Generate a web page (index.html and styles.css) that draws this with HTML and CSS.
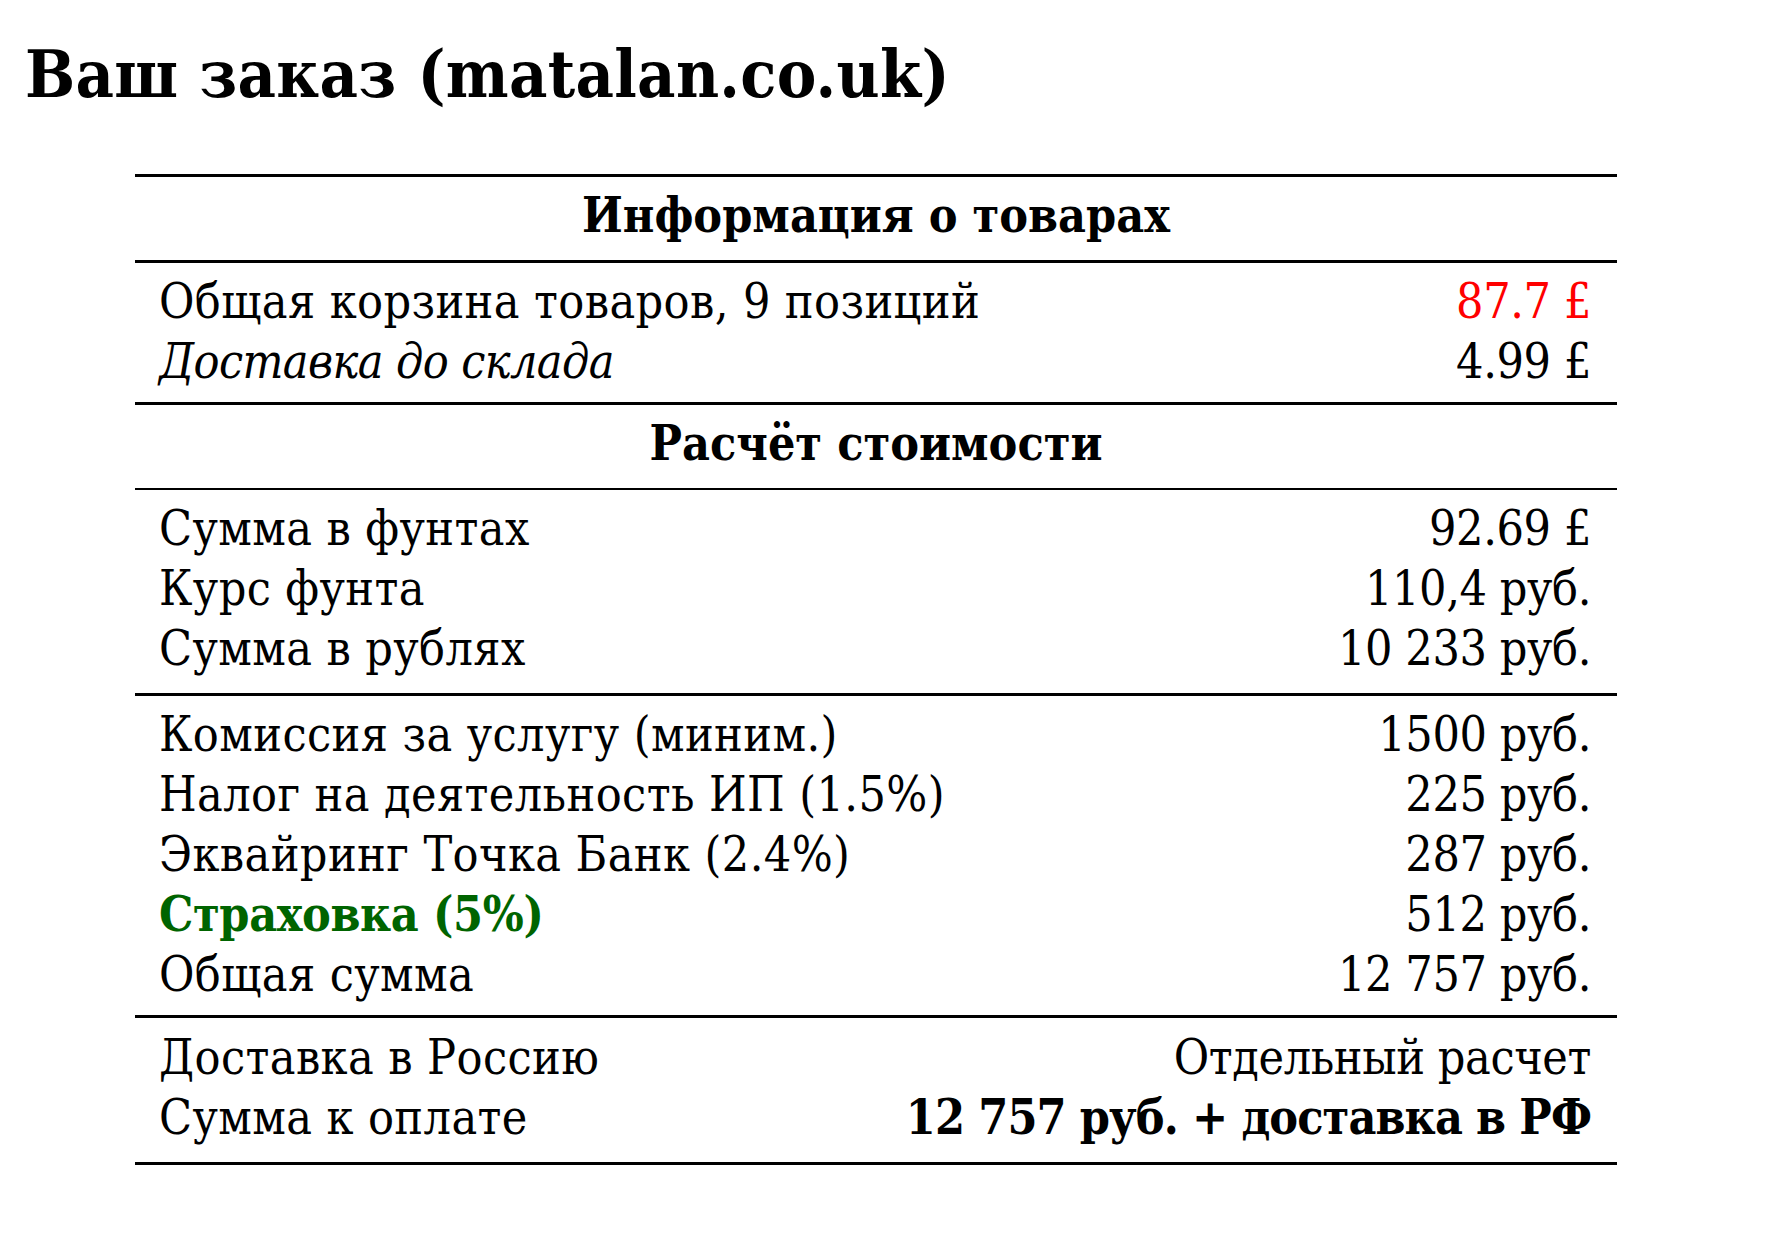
FILE: index.html
```html
<!DOCTYPE html>
<html lang="ru">
<head>
<meta charset="utf-8">
<title>Ваш заказ (matalan.co.uk)</title>
<link rel="stylesheet" href="styles.css">
</head>
<body>
<h1 class="title">Ваш заказ (matalan.co.uk)</h1>
<div class="order">
  <div class="section-head top">Информация о товарах</div>
  <div class="group">
    <div class="row"><span>Общая корзина товаров, 9 позиций</span><span class="val red">87.7 £</span></div>
    <div class="row"><span class="it">Доставка до склада</span><span class="val">4.99 £</span></div>
  </div>
  <div class="section-head thin">Расчёт стоимости</div>
  <div class="group roomy">
    <div class="row"><span>Сумма в фунтах</span><span class="val">92.69 £</span></div>
    <div class="row"><span>Курс фунта</span><span class="val">110,4 руб.</span></div>
    <div class="row"><span>Сумма в рублях</span><span class="val">10 233 руб.</span></div>
  </div>
  <div class="group">
    <div class="row"><span>Комиссия за услугу (миним.)</span><span class="val">1500 руб.</span></div>
    <div class="row"><span>Налог на деятельность ИП (1.5%)</span><span class="val">225 руб.</span></div>
    <div class="row"><span>Эквайринг Точка Банк (2.4%)</span><span class="val">287 руб.</span></div>
    <div class="row"><span class="green">Страховка (5%)</span><span class="val">512 руб.</span></div>
    <div class="row"><span>Общая сумма</span><span class="val">12 757 руб.</span></div>
  </div>
  <div class="group roomy last">
    <div class="row"><span>Доставка в Россию</span><span class="val">Отдельный расчет</span></div>
    <div class="row"><span>Сумма к оплате</span><span class="val bold">12 757 руб. + доставка в РФ</span></div>
  </div>
</div>
</body>
</html>
```

FILE: styles.css
```css
html, body {
  margin: 0;
  padding: 0;
  background: #ffffff;
}

body {
  font-family: "DejaVu Serif Condensed", "DejaVu Serif", "Liberation Serif", serif;
  color: #000000;
  padding: 35px 0 0 25px;
}

.title {
  margin: 0 0 60px 0;
  font-size: 66px;
  line-height: 79px;
  font-weight: bold;
  letter-spacing: 0.3px;
}

.order {
  margin-left: 110px;
  width: 1482px;
  font-size: 48px;
  line-height: 60px;
  letter-spacing: 0.4px;
}

.section-head {
  text-align: center;
  font-weight: bold;
  padding: 8px 26px 15px;
  border-bottom: 3px solid #000;
  letter-spacing: 0;
}

.section-head.top {
  border-top: 3px solid #000;
}

.section-head.thin {
  border-bottom-width: 2px;
}

.group {
  padding: 8px 26px 11px 24px;
  border-bottom: 3px solid #000;
}

.group.roomy {
  padding-bottom: 15px;
}

.group.last {
  padding-top: 9px;
}

.row {
  display: flex;
  justify-content: space-between;
  white-space: nowrap;
}

.val {
  letter-spacing: -0.4px;
}

.it {
  font-style: italic;
  letter-spacing: -0.6px;
}

.red {
  color: #ff0000;
}

.green {
  color: #006400;
  font-weight: bold;
  letter-spacing: -0.4px;
}

.val.bold {
  font-weight: bold;
  letter-spacing: -0.9px;
}
```
